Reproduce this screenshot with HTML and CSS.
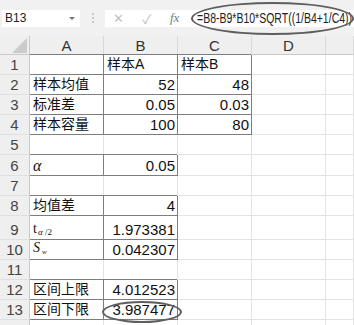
FILE: index.html
```html
<!DOCTYPE html>
<html lang="zh-CN">
<head>
    <meta charset="UTF-8">
    <title>双样本均值差置信区间</title>
    <link rel="stylesheet" href="styles.css">
</head>
<body>

<div class="toolbar">
    <div class="namebox">
        <span class="ref">B13</span>
        <span class="drop"></span>
    </div>
    <div class="dots"><i></i><i></i><i></i></div>
    <div class="formula">
        <span class="btn cancel">✕</span>
        <span class="btn enter">✓</span>
        <span class="fx">fx</span>
        <span class="expr">=B8-B9*B10*SQRT((1/B4+1/C4))</span>
    </div>
</div>

<div class="sheet">
    <div class="hd corner"><span class="tri"></span></div>
    <div class="hd col">A</div>
    <div class="hd col">B</div>
    <div class="hd col">C</div>
    <div class="hd col">D</div>
    <div class="hd col"></div>

    <div class="hd row">1</div>
    <div class="c bx bxa"></div>
    <div class="c bx">样本A</div>
    <div class="c bx">样本B</div>
    <div class="c"></div>
    <div class="c"></div>

    <div class="hd row">2</div>
    <div class="c bx bxa">样本均值</div>
    <div class="c bx num">52</div>
    <div class="c bx num">48</div>
    <div class="c"></div>
    <div class="c"></div>

    <div class="hd row">3</div>
    <div class="c bx bxa">标准差</div>
    <div class="c bx num">0.05</div>
    <div class="c bx num">0.03</div>
    <div class="c"></div>
    <div class="c"></div>

    <div class="hd row">4</div>
    <div class="c bx bxa">样本容量</div>
    <div class="c bx num">100</div>
    <div class="c bx num">80</div>
    <div class="c"></div>
    <div class="c"></div>

    <div class="hd row">5</div>
    <div class="c"></div>
    <div class="c"></div>
    <div class="c"></div>
    <div class="c"></div>
    <div class="c"></div>

    <div class="hd row">6</div>
    <div class="c bx bxa"><span class="greek">α</span></div>
    <div class="c bx num">0.05</div>
    <div class="c"></div>
    <div class="c"></div>
    <div class="c"></div>

    <div class="hd row">7</div>
    <div class="c"></div>
    <div class="c"></div>
    <div class="c"></div>
    <div class="c"></div>
    <div class="c"></div>

    <div class="hd row">8</div>
    <div class="c bx bxa">均值差</div>
    <div class="c bx num">4</div>
    <div class="c"></div>
    <div class="c"></div>
    <div class="c"></div>

    <div class="hd row">9</div>
    <div class="c bx bxa"><span class="sym">t<sub><i>α</i> /2</sub></span></div>
    <div class="c bx num">1.973381</div>
    <div class="c"></div>
    <div class="c"></div>
    <div class="c"></div>

    <div class="hd row">10</div>
    <div class="c bx bxa"><span class="sym sw">S<sub>w</sub></span></div>
    <div class="c bx num">0.042307</div>
    <div class="c"></div>
    <div class="c"></div>
    <div class="c"></div>

    <div class="hd row">11</div>
    <div class="c"></div>
    <div class="c"></div>
    <div class="c"></div>
    <div class="c"></div>
    <div class="c"></div>

    <div class="hd row">12</div>
    <div class="c bx bxa">区间上限</div>
    <div class="c bx num">4.012523</div>
    <div class="c"></div>
    <div class="c"></div>
    <div class="c"></div>

    <div class="hd row">13</div>
    <div class="c bx bxa">区间下限</div>
    <div class="c bx num">3.987477</div>
    <div class="c"></div>
    <div class="c"></div>
    <div class="c"></div>

    <div class="hd row"></div>
    <div class="c"></div>
    <div class="c"></div>
    <div class="c"></div>
    <div class="c"></div>
    <div class="c"></div>
</div>

<!-- hand-drawn circles over the formula and the result -->
<div class="ring ring-formula"></div>
<div class="ring ring-result"></div>

</body>
</html>
```

FILE: styles.css
```css
body {
    margin: 0;
    width: 354px;
    height: 325px;
    overflow: hidden;
    background: #fff;
    font-family: "Liberation Sans", "Noto Sans CJK SC", sans-serif;
    color: #111;
    position: relative;
}

/* formula bar */
.toolbar {
    height: 36px;
    background: #f1f1f1;
    display: flex;
    align-items: center;
    padding-left: 2px;
    box-sizing: border-box;
}
.namebox {
    width: 78px;
    height: 17px;
    background: #fff;
    display: flex;
    align-items: center;
    justify-content: space-between;
    padding: 0 5px 0 3px;
    box-sizing: border-box;
    flex-shrink: 0;
}
.ref {
    font-size: 12px;
    color: #222;
}
.drop {
    width: 0;
    height: 0;
    border-left: 3px solid transparent;
    border-right: 3px solid transparent;
    border-top: 3px solid #777;
}
.dots {
    width: 25px;
    flex-shrink: 0;
    display: flex;
    flex-direction: column;
    align-items: center;
    gap: 2px;
}
.dots i {
    width: 2px;
    height: 2px;
    background: #c9c9c9;
}
.formula {
    flex: 1;
    min-width: 0;
    height: 17px;
    background: #fff;
    display: flex;
    align-items: center;
    white-space: nowrap;
    overflow: hidden;
}
.formula span {
    flex-shrink: 0;
}
.btn {
    color: #c2c2c2;
    font-size: 13px;
    text-align: center;
}
.cancel {
    width: 26px;
}
.enter {
    width: 32px;
}
.fx {
    font-family: "Liberation Serif", serif;
    font-style: italic;
    font-size: 13px;
    color: #7a7a7a;
    margin-left: 7px;
    width: 12px;
}
.expr {
    display: inline-block;
    font-size: 14px;
    color: #222;
    transform: scaleX(0.75);
    transform-origin: left center;
    margin-left: 15px;
}

/* grid */
.sheet {
    display: grid;
    grid-template-columns: 30px repeat(4, 74px) 1fr;
    grid-template-rows: 19px 20px 20px 20px 20px 20px 21px 20px 20px 24px 20px 20px 20px 20px 10px;
}
.hd {
    background: #efefef;
    color: #444;
    font-size: 15px;
    box-sizing: border-box;
    display: flex;
    align-items: flex-end;
    justify-content: center;
    line-height: 15px;
    padding-bottom: 1px;
}
.col {
    border-right: 1px solid #d9d9d9;
    border-bottom: 1px solid #c9c9c9;
    color: #333;
}
.row {
    border-right: 1px solid #c9c9c9;
    border-bottom: 1px solid #e0e0e0;
    padding-bottom: 2px;
}
.corner {
    border-right: 1px solid #c9c9c9;
    border-bottom: 1px solid #c9c9c9;
    position: relative;
}
.tri {
    position: absolute;
    right: 2px;
    bottom: 1px;
    width: 0;
    height: 0;
    border-left: 15px solid transparent;
    border-bottom: 15px solid #cbcbcb;
}
.c {
    border-right: 1px solid #e3e3e3;
    border-bottom: 1px solid #e3e3e3;
    box-sizing: border-box;
    display: flex;
    align-items: flex-end;
    font-size: 14px;
    line-height: 15px;
    padding: 0 2px 2px 3px;
    white-space: nowrap;
}
.bx {
    border-right-color: #7d7d7d;
    border-bottom-color: #7d7d7d;
    box-shadow: -1px -1px 0 #7d7d7d;
}
.bxa {
    box-shadow: 0 -1px 0 #7d7d7d;
}
.num {
    justify-content: flex-end;
    font-size: 15px;
}
.greek {
    font-family: "Liberation Serif", serif;
    font-style: italic;
    font-size: 16px;
}
.sym {
    font-family: "Liberation Serif", serif;
    font-size: 14px;
    line-height: 16px;
}
.sym sub {
    font-size: 9px;
    line-height: 9px;
    vertical-align: -2px;
    margin-left: 1px;
}
.sw {
    font-style: italic;
    font-size: 14px;
}
.sw sub {
    font-size: 7px;
    margin-left: 2px;
}

/* annotation rings */
.ring {
    position: absolute;
    border: 2px solid #5e5e5e;
    border-radius: 50%;
    box-sizing: border-box;
}
.ring-formula {
    left: 191px;
    top: 2px;
    width: 163px;
    height: 33px;
}
.ring-result {
    left: 102px;
    top: 301px;
    width: 80px;
    height: 22px;
}
```
